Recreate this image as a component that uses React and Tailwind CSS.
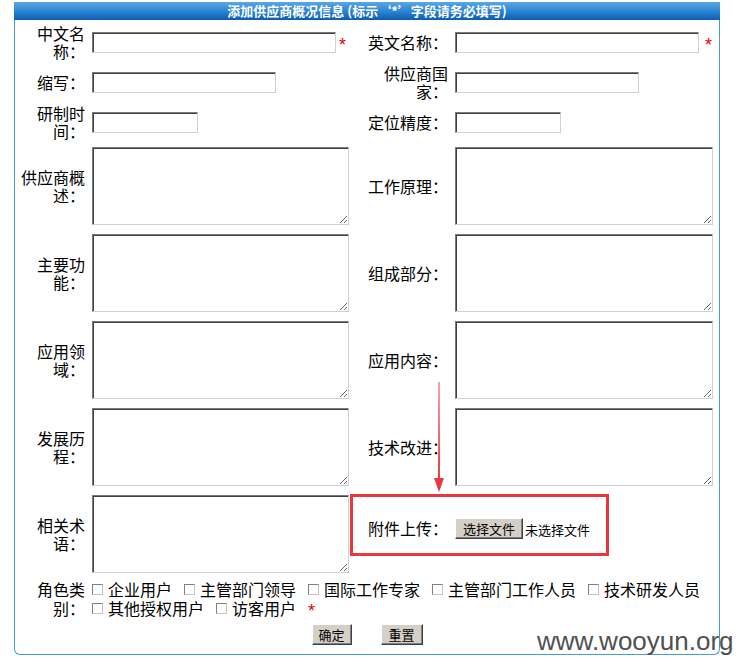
// Supplier info form — classic table-style layout with annotation overlay

const FONT = { fontFamily: '"Noto Sans CJK SC", "Noto Sans", sans-serif' };

const GRID = 'grid grid-cols-[77px_258px_105px_1fr]';
const boxEdge =
  'bg-white border border-t-[#7a7a7a] border-l-[#7a7a7a] border-r-[#d0d0d0] border-b-[#d0d0d0] shadow-[inset_1px_1px_0_#404040] outline-none';
const btn =
  'h-[21px] bg-[#d4d0c8] border border-t-white border-l-white border-r-[#404040] border-b-[#404040] shadow-[inset_-1px_-1px_0_#808080] text-[13px] leading-[17px] text-black';

const Star = ({ className = '' }) => (
  <span className={`inline-block text-[#e00000] text-[18px] leading-[14px] h-[14px] mt-[5px] ${className}`} style={{ fontFamily: '"Liberation Sans", sans-serif' }}>*</span>
);

const LeftLabel = ({ children }) => (
  <div className="pr-[7px] text-right">{children}</div>
);

const RightLabel = ({ children }) => (
  <div className="pl-[10px] pr-[7px] text-right">{children}</div>
);

const Field = ({ w, star, starGap }) => (
  <div className="flex items-center">
    <input type="text" className={`h-[21px] ${w} ${boxEdge}`} />
    {star && <Star className={starGap} />}
  </div>
);

const Area = ({ w }) => (
  <div className="flex items-center">
    <textarea className={`h-[78px] ${w} ${boxEdge}`} />
  </div>
);

const Check = ({ label, first }) => (
  <label className={`flex items-center h-[19px] ${first ? '' : 'ml-[12px]'}`}>
    <input
      type="checkbox"
      className="appearance-none w-[11px] h-[11px] bg-white border border-t-[#808080] border-l-[#808080] border-r-[#c4c4c4] border-b-[#c4c4c4] mr-[5px]"
    />
    <span className="inline-block h-[19px] leading-[19px]">{label}</span>
  </label>
);

const areaRows = [
  ['供应商概述：', '工作原理：'],
  ['主要功能：', '组成部分：'],
  ['应用领域：', '应用内容：'],
  ['发展历程：', '技术改进：'],
];

export default function App() {
  return (
    <div className="relative w-[744px] h-[672px] bg-white text-black text-[16px] leading-[18px]" style={FONT}>
      <div className="ml-[14px] pt-[2px] w-[706px]">
        <div className="border-x border-b border-[#4a9acb] rounded-b-[6px]">
          {/* header bar */}
          <div className="h-[18px] -mx-px bg-gradient-to-b from-[#5aa8e4] via-[#2d86d2] to-[#0b5db2] flex items-center justify-center">
            <span className="text-white font-bold text-[13px] leading-[16px]">添加供应商概况信息 (标示‘*’字段请务必填写)</span>
          </div>

          <div className="pt-[2px]">
            <div className={`${GRID} h-[40px] items-center`}>
              <LeftLabel>中文名称：</LeftLabel>
              <Field w="w-[244px]" star starGap="ml-[3px]" />
              <RightLabel>英文名称：</RightLabel>
              <Field w="w-[244px]" star starGap="ml-[6px]" />
            </div>
            <div className={`${GRID} h-[40px] items-center`}>
              <LeftLabel>缩写：</LeftLabel>
              <Field w="w-[184px]" />
              <RightLabel>供应商国家：</RightLabel>
              <Field w="w-[184px]" />
            </div>
            <div className={`${GRID} h-[40px] items-center`}>
              <LeftLabel>研制时间：</LeftLabel>
              <Field w="w-[106px]" />
              <RightLabel>定位精度：</RightLabel>
              <Field w="w-[106px]" />
            </div>

            {areaRows.map(([l, r]) => (
              <div key={l} className={`${GRID} h-[87px] pt-[5px] pb-[4px] items-center`}>
                <LeftLabel>{l}</LeftLabel>
                <Area w="w-[257px]" />
                <RightLabel>{r}</RightLabel>
                <Area w="w-[258px]" />
              </div>
            ))}

            <div className={`${GRID} h-[87px] pt-[5px] pb-[4px] items-center`}>
              <LeftLabel>相关术语：</LeftLabel>
              <Area w="w-[257px]" />
              <div className="col-span-2 self-start -mt-[1px]">
                <div className="w-[259px] h-[62px] border-[3px] border-[#e8383d] flex items-center pt-[6px]">
                  <div className="w-[95px] text-right">附件上传：</div>
                  <button className={`${btn} ml-[7px] w-[68px]`}>选择文件</button>
                  <span className="ml-[2px] text-[13px] leading-[16px] mt-[4px]">未选择文件</span>
                </div>
              </div>
            </div>

            {/* roles */}
            <div className={`${GRID} pt-[3px] pb-[3px] leading-[19px]`}>
              <LeftLabel>角色类别：</LeftLabel>
              <div className="col-span-3">
                <div className="flex items-center h-[19px]">
                  <Check first label="企业用户" />
                  <Check label="主管部门领导" />
                  <Check label="国际工作专家" />
                  <Check label="主管部门工作人员" />
                  <Check label="技术研发人员" />
                </div>
                <div className="flex items-center h-[19px]">
                  <Check first label="其他授权用户" />
                  <Check label="访客用户" />
                  <Star className="ml-[12px]" />
                </div>
              </div>
            </div>

            <div className="flex justify-center gap-[29px] pt-[3px] pb-[9px]">
              <button className={`${btn} w-[40px]`}>确定</button>
              <button className={`${btn} w-[42px]`}>重置</button>
            </div>
          </div>
        </div>
      </div>

      {/* annotation arrow */}
      <svg className="absolute left-[433px] top-[382px]" width="12" height="112" viewBox="0 0 12 112">
        <defs>
          <linearGradient id="arr" x1="0" y1="0" x2="0" y2="1">
            <stop offset="0" stopColor="#f4a6a8" />
            <stop offset="1" stopColor="#e8383d" />
          </linearGradient>
        </defs>
        <rect x="5" y="0" width="2" height="100" fill="url(#arr)" />
        <polygon points="1,96 11,96 6,110" fill="#e8383d" />
      </svg>

      {/* watermark */}
      <div
        className="absolute left-[537px] top-[628px] text-[26px] leading-[26px] text-[#505050]"
        style={{ fontFamily: '"Liberation Sans", Arial, sans-serif' }}
      >
        www.wooyun.org
      </div>
    </div>
  );
}
